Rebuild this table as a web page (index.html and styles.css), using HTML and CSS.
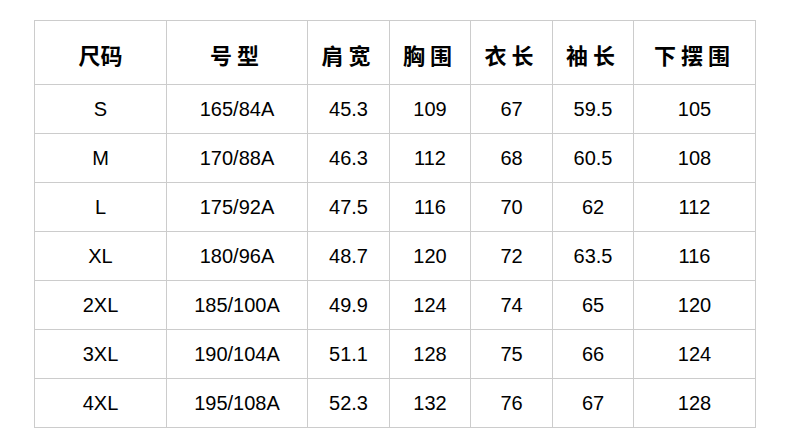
FILE: index.html
```html
<!DOCTYPE html>
<html lang="zh-CN">
<head>
<meta charset="utf-8">
<title>尺码表</title>
<link rel="stylesheet" href="styles.css">
</head>
<body>
<div class="size-table">
  <div class="cell head tight">尺码</div>
  <div class="cell head">号型</div>
  <div class="cell head">肩宽</div>
  <div class="cell head">胸围</div>
  <div class="cell head">衣长</div>
  <div class="cell head">袖长</div>
  <div class="cell head">下摆围</div>

  <div class="cell">S</div><div class="cell">165/84A</div><div class="cell">45.3</div><div class="cell">109</div><div class="cell">67</div><div class="cell">59.5</div><div class="cell">105</div>
  <div class="cell">M</div><div class="cell">170/88A</div><div class="cell">46.3</div><div class="cell">112</div><div class="cell">68</div><div class="cell">60.5</div><div class="cell">108</div>
  <div class="cell">L</div><div class="cell">175/92A</div><div class="cell">47.5</div><div class="cell">116</div><div class="cell">70</div><div class="cell">62</div><div class="cell">112</div>
  <div class="cell">XL</div><div class="cell">180/96A</div><div class="cell">48.7</div><div class="cell">120</div><div class="cell">72</div><div class="cell">63.5</div><div class="cell">116</div>
  <div class="cell">2XL</div><div class="cell">185/100A</div><div class="cell">49.9</div><div class="cell">124</div><div class="cell">74</div><div class="cell">65</div><div class="cell">120</div>
  <div class="cell">3XL</div><div class="cell">190/104A</div><div class="cell">51.1</div><div class="cell">128</div><div class="cell">75</div><div class="cell">66</div><div class="cell">124</div>
  <div class="cell">4XL</div><div class="cell">195/108A</div><div class="cell">52.3</div><div class="cell">132</div><div class="cell">76</div><div class="cell">67</div><div class="cell">128</div>
</div>
</body>
</html>
```

FILE: styles.css
```css
html, body {
  margin: 0;
  background: #fff;
}
body {
  padding: 20px 0 0 34px;
}
.size-table {
  display: grid;
  grid-template-columns: 131px 140px 81px 80px 81px 80px 121px;
  grid-template-rows: 63px repeat(7, 48px);
  gap: 1px;
  padding: 1px;
  background: #cccccc;
  width: max-content;
}
.cell {
  background: #fff;
  display: flex;
  align-items: center;
  justify-content: center;
  font-family: "Liberation Sans", "Noto Sans CJK SC", sans-serif;
  font-size: 20px;
  color: #000;
}
.head {
  font-family: "Noto Sans CJK SC", sans-serif;
  font-size: 22px;
  font-weight: 700;
  letter-spacing: 5px;
  padding-top: 2px;
}
.head.tight {
  letter-spacing: 0;
}
```
